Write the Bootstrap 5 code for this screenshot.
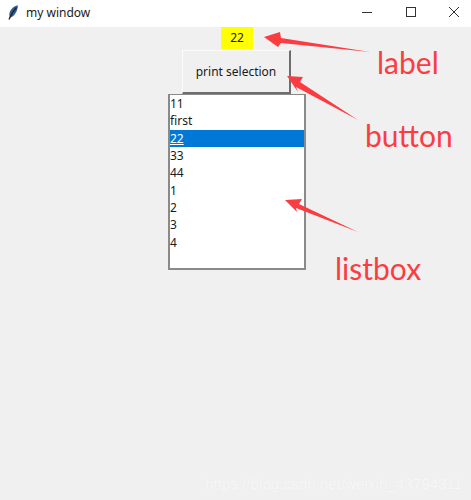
<!DOCTYPE html>
<html lang="en">

<head>
    <meta charset="UTF-8">
    <meta name="viewport" content="width=device-width, initial-scale=1.0">
    <title>my window</title>
    <link href="https://cdn.jsdelivr.net/npm/bootstrap@5.3.0/dist/css/bootstrap.min.css" rel="stylesheet">
    <style>
        body {
            background: #f0f0f0;
            font-family: "Noto Sans", "Open Sans", sans-serif;
            font-size: 12px;
            color: #1a1a1a;
            height: 500px;
            overflow: hidden;
        }

        .win-title {
            height: 27px;
            background: #fff;
        }

        .win-name {
            padding-left: 26px;
            font-size: 12px;
            line-height: 25px;
        }

        .win-icon {
            position: absolute;
            left: 7px;
            top: 5px;
        }

        .win-ctrl {
            width: 34px;
            height: 24px;
        }

        .win-ctrls {
            gap: 9.5px;
        }

        .win-body {
            padding-left: 3px;
        }

        .tk-label {
            width: 32px;
            height: 22px;
            margin-bottom: 1px;
            background: #ffff00;
            line-height: 22px;
            text-align: center;
        }

        .tk-button {
            width: 109px;
            height: 44px;
            margin-right: 1px;
            border: 0;
            border-right: 2px solid #6e6e6e;
            border-bottom: 2px solid #6e6e6e;
            border-top: 1px solid #fbfbfb;
            border-left: 1px solid #fbfbfb;
            background: #f0f0f0;
            padding: 0;
            font-size: 12px;
            color: #1a1a1a;
        }

        .tk-listbox {
            width: 138px;
            height: 176px;
            border: 2px solid #8a8a8a;
            border-top-width: 1px;
            background: #fff;
        }

        .tk-item {
            height: 17.33px;
            line-height: 17px;
            white-space: nowrap;
        }

        .tk-item.on {
            background: #0078d7;
            color: #fff;
            text-decoration: underline;
        }

        .note-arrows {
            position: absolute;
            left: 0;
            top: 0;
            pointer-events: none;
        }

        .note-text {
            position: absolute;
            color: #fb3d42;
            font-family: Lato, "Open Sans", sans-serif;
            font-size: 30px;
            line-height: 40px;
        }

        .wm-text {
            position: absolute;
            left: 205px;
            top: 474px;
            font-family: "Liberation Sans", sans-serif;
            font-size: 15.2px;
            line-height: 20px;
            color: #f6f6f6;
            text-shadow: 0 0 1px #ebebeb;
        }
    </style>
</head>

<body class="position-relative">
    <div class="win-title d-flex justify-content-between position-relative">
        <svg class="win-icon" width="12" height="16" viewBox="0 0 12 16">
            <path d="M10.8 0.3C7 1 3.2 4.5 2.4 8.5C2.1 10.2 2.6 11.6 3.4 12.4C6.5 11.8 9 8.5 10.2 4.5C10.7 3 11 1.5 10.8 0.3Z" fill="#2f5f95" />
            <path d="M9.5 2.5C6.5 5.5 4 9.5 2 14.5" fill="none" stroke="#222" stroke-width="1.2" />
        </svg>
        <div class="win-name">my window</div>
        <div class="win-ctrls d-flex">
            <div class="win-ctrl d-flex align-items-center justify-content-center">
                <svg width="10" height="10" viewBox="0 0 10 10"><path d="M0 5.5H10" stroke="#333" stroke-width="1" /></svg>
            </div>
            <div class="win-ctrl d-flex align-items-center justify-content-center">
                <svg width="10" height="10" viewBox="0 0 10 10"><rect x="0.5" y="0.5" width="9" height="9" fill="none" stroke="#333" stroke-width="1" /></svg>
            </div>
            <div class="win-ctrl d-flex align-items-center justify-content-center">
                <svg width="10" height="10" viewBox="0 0 10 10"><path d="M0 0L10 10M10 0L0 10" stroke="#333" stroke-width="1" /></svg>
            </div>
        </div>
    </div>

    <div class="win-body d-flex flex-column align-items-center">
        <div class="tk-label">22</div>
        <button class="tk-button" type="button">print selection</button>
        <div class="tk-listbox">
            <div class="tk-item">11</div>
            <div class="tk-item">first</div>
            <div class="tk-item on">22</div>
            <div class="tk-item">33</div>
            <div class="tk-item">44</div>
            <div class="tk-item">1</div>
            <div class="tk-item">2</div>
            <div class="tk-item">3</div>
            <div class="tk-item">4</div>
        </div>
    </div>

    <!-- annotations drawn over the screenshot -->
    <svg class="note-arrows" width="471" height="500" viewBox="0 0 471 500">
        <polygon points="264,37 280,32 281,38 370,52 281,43 278,47" fill="#fb3d42" />
        <polygon points="287,76 303,77 300,82 358,120 296,87 298,92" fill="#fb3d42" />
        <polygon points="285,200 302,199 299,204 358,232 296,208 297,212" fill="#fb3d42" />
    </svg>
    <div class="note-text" style="left:377px;top:42px">label</div>
    <div class="note-text" style="left:365px;top:115px">button</div>
    <div class="note-text" style="left:335px;top:248px">listbox</div>
    <div class="wm-text">https://blog.csdn.net/weixin_43794311</div>

    <script src="https://cdn.jsdelivr.net/npm/bootstrap@5.3.0/dist/js/bootstrap.bundle.min.js"></script>
</body>

</html>
